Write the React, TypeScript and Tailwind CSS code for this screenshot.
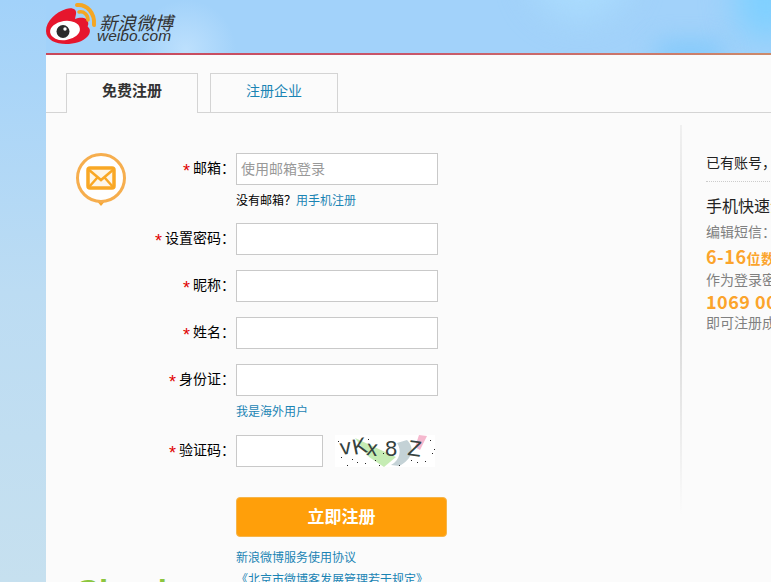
const fontStack = "font-['Noto_Sans_CJK_SC','Liberation_Sans',sans-serif]"

const rows = [
  { label: "设置密码：", hint: null },
  { label: "昵称：", hint: null },
  { label: "姓名：", hint: null },
  { label: "身份证：", hint: "我是海外用户" },
]

function WeiboLogo() {
  return (
    <svg width="54" height="46" viewBox="0 0 54 46" className="shrink-0">
      <path
        d="M0 30C0 20 10 11 20 8c6-2 11 0 10 5l-1 5c5-2 12-2 13 3 1 3-1 4 0 5 3 2 2 7 0 9-5 6-14 8-22 8C10 43 0 39 0 30z"
        fill="#e6162d"
      />
      <ellipse cx="19" cy="29.500" rx="15" ry="9.500" fill="#fff" transform="rotate(-8 19 29.500)" />
      <circle cx="17" cy="30.500" r="6.500" fill="#2c2c2c" />
      <circle cx="19" cy="28" r="1.700" fill="#fff" />
      <path d="M31 4c10-1 18 8 17 20" fill="none" stroke="#f5a623" strokeWidth="4" strokeLinecap="round" />
      <path d="M33 11c5-1 9 3 9 8" fill="none" stroke="#f5a623" strokeWidth="3.500" strokeLinecap="round" />
    </svg>
  )
}

function MailBadge() {
  return (
    <svg width="52" height="56" viewBox="0 0 52 56">
      <path d="M21 48l5 6 5-6z" fill="#f7a731" />
      <circle cx="26" cy="26" r="23.500" fill="#fff" stroke="#f6ae4e" strokeWidth="3" />
      <rect x="13" y="16" width="26" height="20" rx="2" fill="#fdf6e8" stroke="#f9a825" strokeWidth="3.500" />
      <path d="M13 17l13 11 13-11M14 35l8-9M38 35l-8-9" fill="none" stroke="#f9a825" strokeWidth="2.500" />
    </svg>
  )
}

function Captcha() {
  const letters = [
    { ch: "v", x: 6, y: 20, r: -8 },
    { ch: "K", x: 19, y: 20, r: -12 },
    { ch: "x", x: 31, y: 20, r: 6 },
    { ch: "8", x: 50, y: 21, r: 0 },
    { ch: "Z", x: 72, y: 20, r: 8 },
  ]
  return (
    <svg width="100" height="32" viewBox="0 0 100 32" className="bg-white">
      <path d="M20 3l41 19-12 10-15-10z" fill="#c5ecb4" />
      <path d="M72 5c8 8 6 19-8 26l-8-1c9-5 11-15 6-22z" fill="#c4d2d6" />
      <path d="M84 0l8 1-7 14-5-3z" fill="#f5b8ce" />
      {letters.map((l) => (
        <text
          key={l.ch}
          x={l.x}
          y={l.y}
          fontSize="22"
          fontFamily="'Liberation Sans', sans-serif"
          fill="#35423e"
          transform={`rotate(${l.r} ${l.x} ${l.y})`}
        >
          {l.ch}
        </text>
      ))}
      {[
        [6, 22], [12, 30], [17, 24], [22, 27], [30, 28], [33, 4], [3, 6], [44, 30], [48, 18],
        [64, 30], [76, 25], [82, 27], [90, 26], [95, 5], [97, 18], [99, 14], [52, 9], [40, 25],
      ].map(([x, y], i) => (
        <rect key={i} x={x} y={y} width="1" height="1" fill="#222" />
      ))}
    </svg>
  )
}

function Field({ label, children }: { label: string; children: React.ReactNode }) {
  return (
    <div className="flex items-center">
      <label className="flex w-[189px] items-center justify-end pb-[4px] text-sm text-black">
        <span className="mr-[3px] translate-y-[4px] font-['Liberation_Sans',sans-serif] text-lg leading-5 text-[#e00000]">*</span>
        {label}
      </label>
      <div className="ml-[1px]">{children}</div>
    </div>
  )
}

const inputClass = "block h-8 border border-[#c9c9c9] bg-white px-1 pb-[2px] text-sm outline-none placeholder:text-[#999]"

export default function App() {
  return (
    <div className={`flex h-[582px] w-[771px] flex-col overflow-hidden bg-gradient-to-b from-[#a2d2fa] via-[#bcdcf3] to-[#c6e0ef] pl-[46px] ${fontStack}`}>
      <header className="relative flex h-[53px] shrink-0 items-start overflow-hidden bg-[radial-gradient(circle_at_140px_50px,#bde0fd_0,#a2d2fa_50px)] pt-[1px]">
        <WeiboLogo />
        <div className="relative z-10 ml-[-1px] mt-[12px] text-[#333]">
          <div className="text-[18.500px] italic leading-[18px]">新浪微博</div>
          <div className="ml-[-2px] font-['Liberation_Sans',sans-serif] text-[15.500px] italic leading-[10px]">weibo.com</div>
        </div>
        <div className="absolute right-[141px] top-[-80px] h-[100px] w-[100px] rounded-full bg-[#aadbfd] blur-lg" />
        <div className="absolute right-[-25px] top-[-50px] h-[90px] w-[60px] rounded-full bg-[#7fd0ff] blur-lg" />
        <div className="absolute bottom-[-10px] right-[46px] h-[20px] w-[70px] rounded-full bg-[#7cc8fb] blur-md" />
      </header>
      <div className="h-[2px] shrink-0 bg-gradient-to-r from-[#c9485a] via-[#c8566a] to-[#cc8a6a]" />
      <main className="flex-1 bg-[#fbfbfb]">
        <nav className="flex h-[58px] items-end gap-3 border-b border-[#d4d4d4] pl-5">
          <div className="mb-[-1px] flex h-10 w-[132px] items-center justify-center border border-b-0 border-[#d4d4d4] bg-[#fbfbfb] pb-[6px] text-[15px] font-bold text-[#333]">
            免费注册
          </div>
          <div className="flex h-[39px] w-[128px] items-center justify-center border border-b-0 border-[#d4d4d4] pb-[6px] text-sm text-[#1a84b4]">
            注册企业
          </div>
        </nav>
        <div className="flex">
          <section className="relative w-[634px] shrink-0 pt-10">
            <div className="absolute left-[29px] top-[39px]">
              <MailBadge />
            </div>
            <Field label="邮箱：">
              <input className={`${inputClass} w-[202px]`} placeholder="使用邮箱登录" />
            </Field>
            <p className="mt-[6px] h-[32px] pl-[190px] text-xs leading-[18px] text-black">
              没有邮箱？<a className="text-[#1a84b4]">用手机注册</a>
            </p>
            <div className="flex flex-col gap-[15px]">
              {rows.map((row) => (
                <div key={row.label}>
                  <Field label={row.label}>
                    <input className={`${inputClass} w-[202px]`} />
                  </Field>
                  {row.hint && <a className="mt-[6px] block pl-[190px] text-xs leading-[18px] text-[#1a84b4]">{row.hint}</a>}
                </div>
              ))}
            </div>
            <div className="mt-[15px]">
              <Field label="验证码：">
                <div className="flex items-center gap-3">
                  <input className={`${inputClass} w-[87px]`} />
                  <Captcha />
                </div>
              </Field>
            </div>
            <button className="ml-[190px] mt-[30px] block h-10 w-[211px] rounded-sm border border-[#f6b54a] bg-[#ff9f0a] pb-[3px] text-[17px] font-bold text-white">
              立即注册
            </button>
            <a className="mt-[11px] block pl-[190px] text-xs leading-[18px] text-[#1a84b4]">新浪微博服务使用协议</a>
            <a className="mt-[4px] block pl-[190px] text-xs leading-[18px] text-[#1a84b4]">《北京市微博客发展管理若干规定》</a>
            <div className="absolute left-[31px] top-[462px] font-['Liberation_Sans',sans-serif] text-[33px] font-bold leading-none text-[#8cc63f]">Sign in</div>
          </section>
          <div className="mt-3 h-[390px] w-[2px] shrink-0 bg-gradient-to-b from-[#f0f0f0] via-[#d8d8d8] to-[#fbfbfb]" />
          <aside className="ml-6 min-w-0 flex-1 overflow-hidden whitespace-nowrap pt-[39px] text-sm">
            <p className="h-[29px] leading-5 text-[#222]">已有账号，立即登录</p>
            <div className="w-[200px] border-t border-dotted border-[#ccc]" />
            <p className="mt-[11px] text-base leading-6 text-[#222]">手机快速注册</p>
            <p className="mt-1 leading-5 text-[#808080]">编辑短信：</p>
            <p className="mt-[3px] text-lg font-bold leading-6 tracking-[0.5px] text-[#fba42c]">6-16<span className="text-sm">位数字或字母</span></p>
            <p className="mt-[1px] leading-5 text-[#808080]">作为登录密码，发送到</p>
            <p className="mt-[2px] text-lg font-bold leading-[21px] tracking-[0.5px] text-[#fba42c]">1069 0090 999</p>
            <p className="leading-5 text-[#808080]">即可注册成功</p>
          </aside>
        </div>
      </main>
    </div>
  )
}
